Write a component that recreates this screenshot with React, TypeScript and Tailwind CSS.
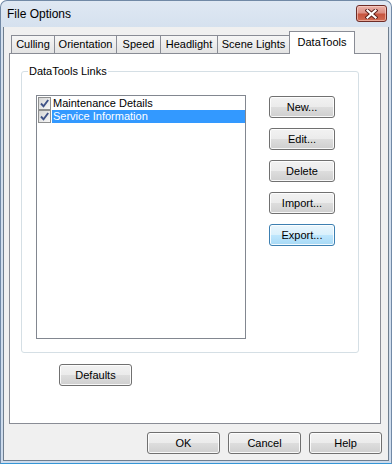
import React from "react";

function Btn({ label, className }: { label: string; className: string }) {
  return (
    <button
      className={
        "h-[22px] rounded-[3px] border text-[11px] leading-[13px] text-black flex items-center justify-center shadow-[inset_0_0_0_1px_rgba(255,255,255,0.85)] " +
        className
      }
    >
      {label}
    </button>
  );
}

const normalBtn =
  "border-[#707070] bg-[linear-gradient(to_bottom,#f2f2f2_0%,#ebebeb_50%,#dddddd_51%,#cfcfcf_100%)]";
const focusBtn =
  "border-[#3c7fb1] bg-[linear-gradient(to_bottom,#eaf6fd_0%,#d9f0fc_50%,#bee6fd_51%,#a7d9f5_100%)]";

function Check() {
  return (
    <span className="w-[13px] h-[13px] border border-[#8e8f8f] bg-[linear-gradient(135deg,#d6d6d6,#f7f7f7)] flex items-center justify-center shrink-0">
      <svg width="11" height="11" viewBox="0 0 11 11">
        <path d="M2 5.5 L4.5 8.3 L9.2 2" fill="none" stroke="#3f5287" strokeWidth="1.9" />
      </svg>
    </span>
  );
}

function Tab({ label, className }: { label: string; className: string }) {
  return (
    <div
      className={
        "h-[18px] border-l border-t border-[#898c95] bg-[linear-gradient(to_bottom,#f6f6f6,#e3e3e3)] flex items-center justify-center text-[11px] leading-[13px] " +
        className
      }
    >
      {label}
    </div>
  );
}

export default function App() {
  return (
    <div className="w-[392px] h-[464px] flex flex-col border border-[#7189a6] border-b-[#3596d6] rounded-t-[7px] overflow-hidden bg-[linear-gradient(to_bottom,#dfe8f3,#d4e0ee_30px,#cddbec)] font-['Liberation_Sans',Arial,sans-serif] text-[11px] text-black">
      {/* Title bar */}
      <div className="h-[26px] flex items-start justify-between pl-[6px] pr-[4px] shrink-0">
        <span className="mt-[6px] text-[12px] leading-[15px] text-black">File Options</span>
        <div className="mt-[4px] w-[31px] h-[17px] rounded-[3px] border border-[#6e2c27] bg-[linear-gradient(to_bottom,#ebb2a9_0%,#dc9085_45%,#c7543f_55%,#d16d55_100%)] shadow-[inset_0_0_0_1px_rgba(255,220,210,0.55)] flex items-center justify-center">
          <svg width="13" height="10" viewBox="0 0 13 10">
            <path d="M2.5 1.5 L10.5 8.5 M10.5 1.5 L2.5 8.5" stroke="#5a1f1a" strokeWidth="4" strokeLinecap="square" />
            <path d="M2.5 1.5 L10.5 8.5 M10.5 1.5 L2.5 8.5" stroke="#ffffff" strokeWidth="2.2" strokeLinecap="square" />
          </svg>
        </div>
      </div>

      {/* Client area */}
      <div className="flex-1 mx-[2px] mb-[2px] border-x border-b border-[#6f7e8e] bg-[#f0f0f0] flex flex-col">
        {/* Tabs */}
        <div className="h-[26px] pt-[4px] pl-[7px] flex items-end shrink-0">
          <Tab label="Culling" className="w-[43px]" />
          <Tab label="Orientation" className="w-[62px]" />
          <Tab label="Speed" className="w-[44px]" />
          <Tab label="Headlight" className="w-[57px]" />
          <Tab label="Scene Lights" className="w-[72px]" />
          <div className="relative z-10 w-[66px] h-[23px] -mb-[1px] border-l border-t border-r border-[#898c95] bg-white flex items-start justify-center pt-[4px] text-[11px] leading-[13px]">
            DataTools
          </div>
        </div>

        {/* Panel */}
        <div className="ml-[5px] w-[372px] h-[371px] border border-[#898c95] bg-white flex flex-col shrink-0">
          {/* Group box */}
          <div className="relative ml-[11px] mt-[17px] w-[338px] h-[282px] border border-[#d5dfe5] rounded-[3px] flex">
            <span className="absolute left-[6px] -top-[7px] px-[1px] bg-white leading-[13px]">DataTools Links</span>
            {/* List box */}
            <div className="ml-[14px] mt-[23px] w-[210px] h-[244px] border border-[#828790] bg-white pt-[1px] flex flex-col">
              <div className="h-[13px] flex items-center">
                <span className="ml-[1px]"><Check /></span>
                <span className="ml-[1px] pl-[1px] h-[13px] leading-[13px] flex-1">Maintenance Details</span>
              </div>
              <div className="h-[13px] flex items-center">
                <span className="ml-[1px]"><Check /></span>
                <span className="ml-[1px] pl-[1px] h-[13px] leading-[13px] flex-1 bg-[#3399ff] text-white">Service Information</span>
              </div>
            </div>
            {/* Buttons */}
            <div className="ml-[23px] mt-[24px] flex flex-col gap-[10px]">
              <Btn label="New..." className={"w-[66px] " + normalBtn} />
              <Btn label="Edit..." className={"w-[66px] " + normalBtn} />
              <Btn label="Delete" className={"w-[66px] " + normalBtn} />
              <Btn label="Import..." className={"w-[66px] " + normalBtn} />
              <Btn label="Export..." className={"w-[66px] " + focusBtn} />
            </div>
          </div>
          <div className="ml-[49px] mt-[11px]">
            <Btn label="Defaults" className={"w-[73px] " + normalBtn} />
          </div>
        </div>

        {/* Bottom buttons */}
        <div className="mt-[8px] pr-[6px] flex justify-end gap-[8px]">
          <Btn label="OK" className={"w-[73px] " + normalBtn} />
          <Btn label="Cancel" className={"w-[73px] " + normalBtn} />
          <Btn label="Help" className={"w-[73px] " + normalBtn} />
        </div>
      </div>
    </div>
  );
}
